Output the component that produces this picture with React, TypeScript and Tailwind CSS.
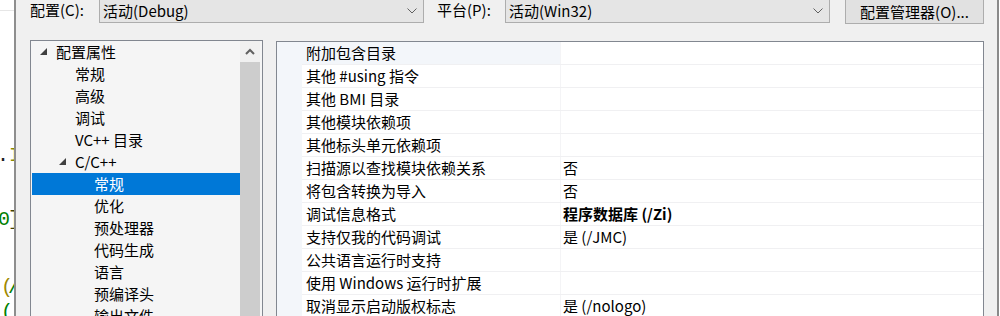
import React from "react";

type TreeItem = {
  label: string;
  level: 0 | 1 | 2;
  expanded?: boolean;
  selected?: boolean;
};

const treeItems: TreeItem[] = [
  { label: "配置属性", level: 0, expanded: true },
  { label: "常规", level: 1 },
  { label: "高级", level: 1 },
  { label: "调试", level: 1 },
  { label: "VC++ 目录", level: 1 },
  { label: "C/C++", level: 1, expanded: true },
  { label: "常规", level: 2, selected: true },
  { label: "优化", level: 2 },
  { label: "预处理器", level: 2 },
  { label: "代码生成", level: 2 },
  { label: "语言", level: 2 },
  { label: "预编译头", level: 2 },
  { label: "输出文件", level: 2 },
];

const levelPad = ["pl-[8px]", "pl-[27px]", "pl-[46px]"];

type Prop = { name: string; value?: string; bold?: boolean; first?: boolean };

const props: Prop[] = [
  { name: "附加包含目录", first: true },
  { name: "其他 #using 指令" },
  { name: "其他 BMI 目录" },
  { name: "其他模块依赖项" },
  { name: "其他标头单元依赖项" },
  { name: "扫描源以查找模块依赖关系", value: "否" },
  { name: "将包含转换为导入", value: "否" },
  { name: "调试信息格式", value: "程序数据库 (/Zi)", bold: true },
  { name: "支持仅我的代码调试", value: "是 (/JMC)" },
  { name: "公共语言运行时支持" },
  { name: "使用 Windows 运行时扩展" },
  { name: "取消显示启动版权标志", value: "是 (/nologo)" },
];

const font = "font-['Microsoft_YaHei_UI','Noto_Sans_CJK_SC',sans-serif]";

function Chevron() {
  return (
    <svg width="10" height="6" viewBox="0 0 10 6" className="shrink-0">
      <polyline points="0.5,0.5 5,5 9.5,0.5" fill="none" stroke="#606060" strokeWidth="1" />
    </svg>
  );
}

function Combo({ text }: { text: string }) {
  return (
    <div className="flex items-center justify-between w-[325px] h-[23px] bg-[#e5e5e5] border-x border-b border-[#adadad] pl-[3px] pr-[6px]">
      <span className="leading-[20px]">{text}</span>
      <Chevron />
    </div>
  );
}

function Triangle() {
  return (
    <svg width="8" height="8" viewBox="0 0 8 8">
      <polygon points="7,0 7,7 0,7" fill="#404040" />
    </svg>
  );
}

export default function App() {
  return (
    <div className={`flex w-[1000px] h-[316px] overflow-hidden text-[15px] text-black ${font}`}>
      {/* code editor behind the dialog */}
      <div className="relative w-[14px] shrink-0 bg-white overflow-hidden font-['Liberation_Mono',monospace] text-[20px] leading-[28px]">
        <div className="absolute left-0 top-[10px] w-full h-px bg-[#e6e6e6]" />
        <span className="absolute left-[-3px] top-[142px] text-[#202020]">.</span>
        <span className="absolute left-[9px] top-[142px] text-[#8a8a00]">I</span>
        <span className="absolute left-[-2px] top-[206px] text-[#008000]">0</span>
        <span className="absolute left-[8px] top-[206px] text-[#404000]">]</span>
        <span className="absolute left-[1px] top-[274px] text-[#a08800]">(</span>
        <span className="absolute left-[8px] top-[274px] text-[#008000]">/</span>
        <span className="absolute left-[1px] top-[299px] text-[#008000]">(</span>
      </div>

      {/* dialog */}
      <div className="flex-1 flex flex-col bg-[#f0f0f0] border-l-2 border-l-[#8e8e8e] border-r-[2px] border-r-[#8a8a8a] mr-px">
        <div className="flex items-start h-[24px]">
          <span className="ml-[14px] w-[69px] leading-[20px]">配置(C):</span>
          <Combo text="活动(Debug)" />
          <span className="ml-[13px] w-[68px] leading-[20px]">平台(P):</span>
          <Combo text="活动(Win32)" />
          <div className="ml-[15px] w-[139px] h-[24px] flex items-center justify-center bg-[#e1e1e1] border-x border-b border-[#adadad] leading-[20px]">
            配置管理器(O)...
          </div>
        </div>

        <div className="flex gap-[13px] mt-[16px] ml-[14px] flex-1">
          {/* tree */}
          <div className="flex w-[233px] bg-[#f5f5f5] border-x border-t border-[#828790] pl-px">
            <div className="w-[208px] flex flex-col">
              {treeItems.map((it, i) => (
                <div
                  key={i}
                  className={`flex items-center h-[22px] shrink-0 ${levelPad[it.level]} ${
                    it.selected ? "bg-[#0078d7] text-white" : ""
                  }`}
                >
                  <span className="w-[16px] flex items-center">{it.expanded ? <Triangle /> : null}</span>
                  <span className="leading-[20px] whitespace-nowrap">{it.label}</span>
                </div>
              ))}
            </div>
            <div className="w-[20px] flex flex-col">
              <div className="h-[21px] flex items-center justify-center bg-[#f0f0f0]">
                <svg width="10" height="7" viewBox="0 0 10 7">
                  <polyline points="1,6 5,2 9,6" fill="none" stroke="#606060" strokeWidth="2" />
                </svg>
              </div>
              <div className="flex-1 bg-[#cdcdcd]" />
            </div>
          </div>

          {/* property grid */}
          <div className="flex w-[708px] bg-white border-x border-t border-[#828790] mt-px">
            <div className="w-[25px] bg-[#f3f6fa]" />
            <div className="flex-1 flex flex-col">
              {props.map((p, i) => (
                <div key={i} className="flex h-[23px] shrink-0 border-b border-[#f0f0f2]">
                  <div
                    className={`w-[259px] flex items-center pl-[4px] whitespace-nowrap border-r border-[#f4f4f6] ${
                      p.first ? "bg-[#f3f6fa]" : ""
                    }`}
                  >
                    <span className="leading-[20px]">{p.name}</span>
                  </div>
                  <div className={`flex-1 flex items-center pl-[2px] ${p.bold ? "font-bold" : ""}`}>
                    <span className="leading-[20px]">{p.value ?? ""}</span>
                  </div>
                </div>
              ))}
            </div>
          </div>
        </div>
      </div>
    </div>
  );
}
